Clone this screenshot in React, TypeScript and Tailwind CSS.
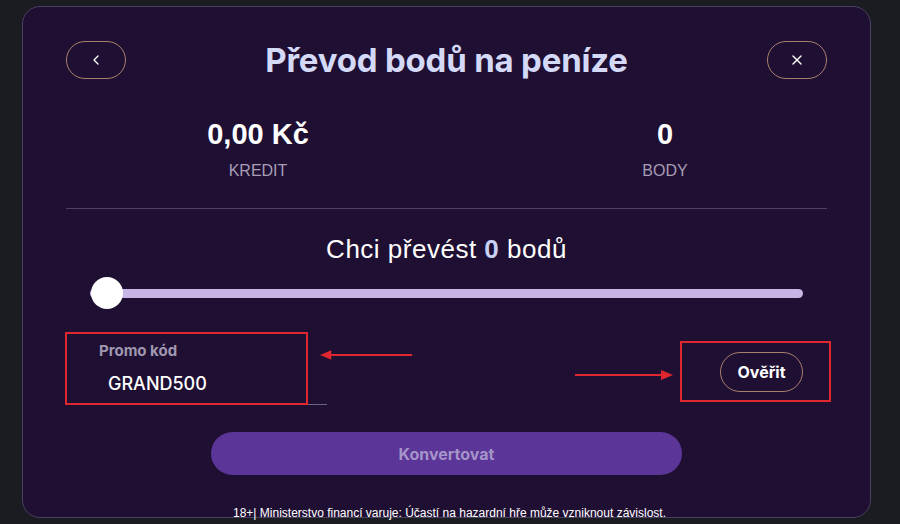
import React, { useState } from 'react';
import { ChevronLeft, X } from 'lucide-react';

const Arrow: React.FC<{ dir: 'left' | 'right'; className?: string }> = ({ dir, className }) => (
  <svg width="100" height="12" viewBox="0 0 100 12" className={className}>
    {dir === 'left' ? (
      <>
        <line x1="10" y1="6" x2="98" y2="6" stroke="#e0262f" strokeWidth="2" />
        <polygon points="0,6 12,1 12,11" fill="#e0262f" />
      </>
    ) : (
      <>
        <line x1="2" y1="6" x2="90" y2="6" stroke="#e0262f" strokeWidth="2" />
        <polygon points="100,6 88,1 88,11" fill="#e0262f" />
      </>
    )}
  </svg>
);

const App: React.FC = () => {
  const [points] = useState(0);
  const [promo] = useState('GRAND500');

  return (
    <div className="w-[900px] h-[524px] bg-[#1b1b22] pt-[6px] pl-[22px] overflow-hidden">
      <div className="relative w-[849px] h-[512px] rounded-[18px] border border-[#4a4060] bg-[#1f1033] flex flex-col">
        {/* Header */}
        <div className="flex items-center justify-between px-[43px] pt-[34px]">
          <button className="w-[60px] h-[38px] rounded-full border border-[#a9806c] flex items-center justify-center text-white">
            <ChevronLeft className="w-4 h-4" strokeWidth={2} />
          </button>
          <h1 className="flex-1 text-center text-[33px] leading-[38px] font-bold text-[#d4d9f7] font-['Inter',sans-serif] tracking-[-0.2px]">
            Převod bodů na peníze
          </h1>
          <button className="w-[60px] h-[38px] rounded-full border border-[#a9806c] flex items-center justify-center text-white">
            <X className="w-4 h-4" strokeWidth={2} />
          </button>
        </div>

        {/* Balances */}
        <div className="flex mt-[38px] pl-[135px]">
          <div className="w-[200px] flex flex-col items-center">
            <span className="text-[29px] leading-[34px] font-bold text-white font-['Liberation_Sans',sans-serif]">0,00 Kč</span>
            <span className="mt-[10px] text-[16px] leading-[20px] text-[#a79db5] font-['Liberation_Sans',sans-serif]">KREDIT</span>
          </div>
          <div className="w-[200px] ml-[207px] flex flex-col items-center">
            <span className="text-[29px] leading-[34px] font-bold text-white font-['Liberation_Sans',sans-serif]">{points}</span>
            <span className="mt-[10px] text-[16px] leading-[20px] text-[#a79db5] font-['Liberation_Sans',sans-serif]">BODY</span>
          </div>
        </div>

        <div className="mx-[43px] mt-[27px] h-px bg-[#4e3f66]" />

        {/* Slider */}
        <div className="mt-[26px] text-center text-[26px] leading-[28px] tracking-[0.5px] text-white font-['Liberation_Sans',sans-serif]">
          Chci převést <span className="font-bold text-[#c9d2f6]">{points}</span> bodů
        </div>
        <div className="relative mx-[67px] mt-[14px] h-[32px] flex items-center">
          <div className="w-full h-[9px] rounded-full bg-[#c7b5e6]" />
          <div className="absolute left-[1px] top-0 w-[32px] h-[32px] rounded-full bg-white" />
        </div>

        {/* Promo code */}
        <div className="relative flex items-start mt-[32px] px-[43px]">
          <div className="w-[261px] border-b border-[#6c6480] pb-[8px]">
            <div className="pl-[33px] text-[15px] leading-[20px] font-bold text-[#9f98b0] font-['Inter',sans-serif]">Promo kód</div>
            <div className="pl-[42px] mt-[11px] text-[18px] leading-[24px] font-medium text-white font-['Inter',sans-serif]">{promo}</div>
          </div>
          <button className="ml-auto mr-[24px] mt-[11px] w-[83px] h-[40px] rounded-full border border-[#a9806c] text-[16px] font-bold text-white font-['Inter',sans-serif]">
            Ověřit
          </button>

          {/* annotations */}
          <div className="absolute left-[42px] top-[-9px] w-[243px] h-[73px] border-2 border-[#e0262f]" />
          <Arrow dir="left" className="absolute left-[297px] top-[8px] w-[94px]" />
          <Arrow dir="right" className="absolute left-[550px] top-[28px] w-[100px]" />
          <div className="absolute left-[657px] top-[0px] w-[151px] h-[61px] border-2 border-[#e0262f]" />
        </div>

        <div className="flex justify-center mt-[27px]">
          <button className="w-[471px] h-[43px] rounded-full bg-[#5b3597] text-[16px] font-bold text-[#a594c9] font-['Inter',sans-serif]">
            Konvertovat
          </button>
        </div>

        <div className="mt-auto mb-[-3px] pl-[6px] text-center text-[12px] leading-[14px] text-white font-['Liberation_Sans',sans-serif]">
          18+| Ministerstvo financí varuje: Účastí na hazardní hře může vzniknout závislost.
        </div>
      </div>
    </div>
  );
};

export default App;
